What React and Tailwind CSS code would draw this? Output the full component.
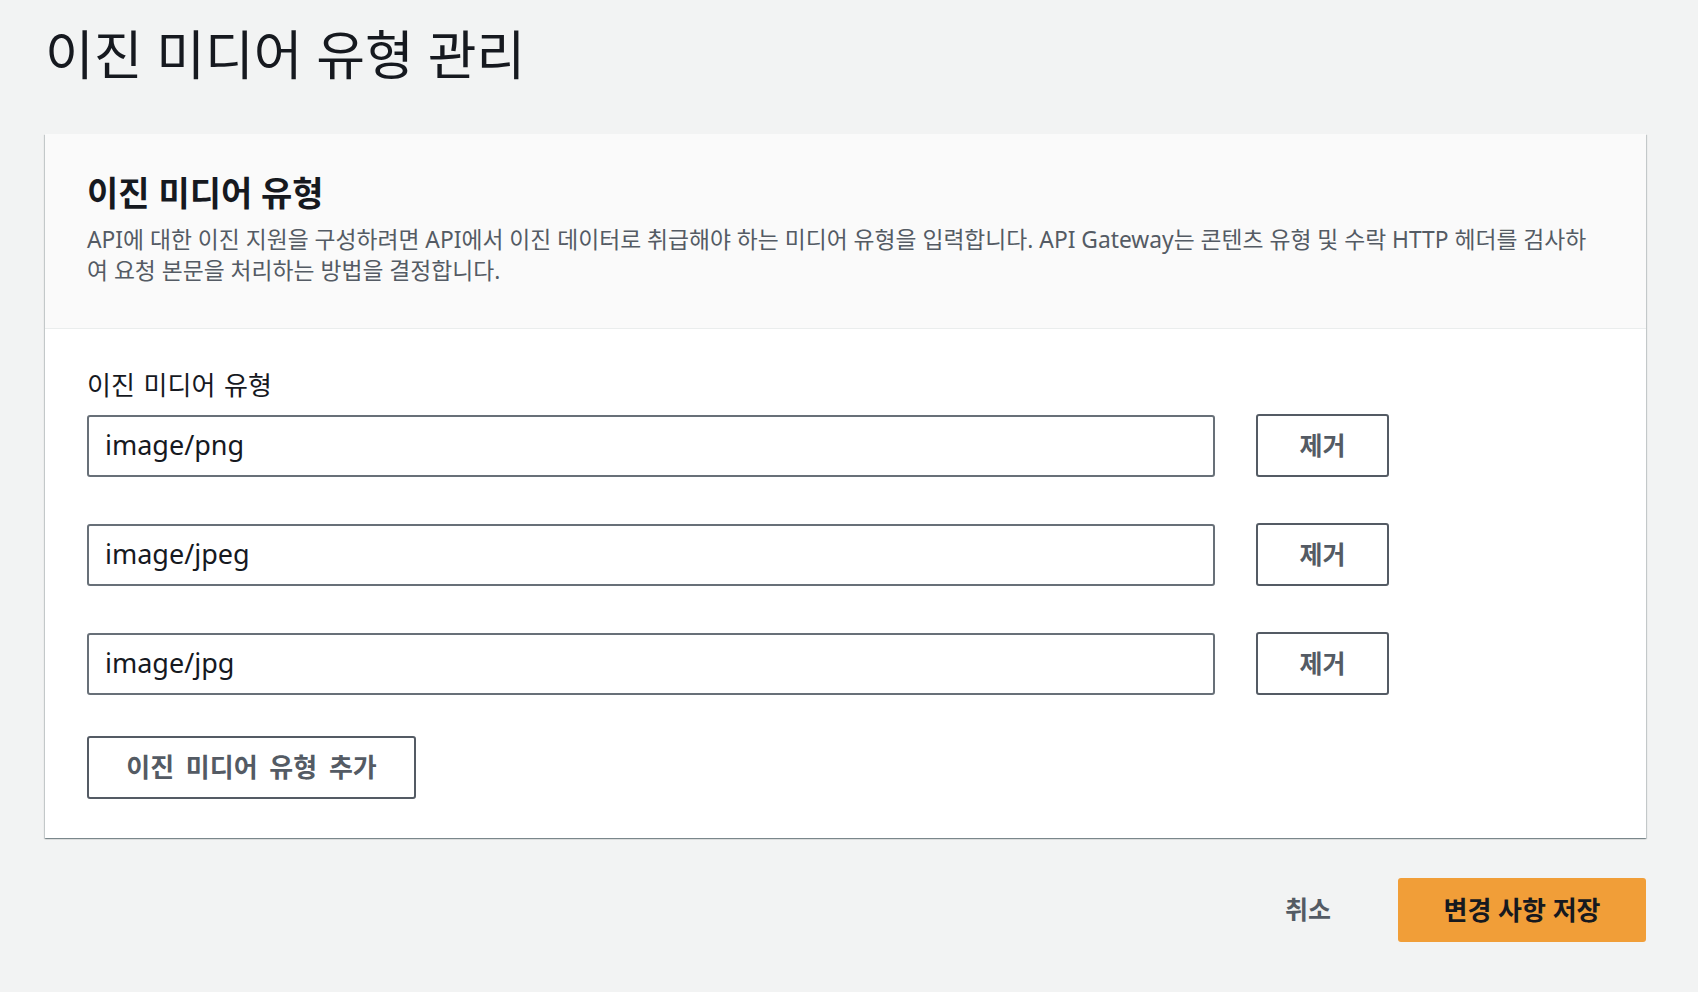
import React from "react";

const types = ["image/png", "image/jpeg", "image/jpg"];

export default function App() {
  return (
    <div className="min-h-screen bg-[#f2f3f3] pl-[45px] pr-[52px] font-['Noto_Sans','Noto_Sans_CJK_KR',sans-serif] text-[#16191f]">
      <h1 className="pt-[25px] text-[53px] leading-[60px] font-normal text-[#16191f]">
        이진 미디어 유형 관리
      </h1>

      <div className="mt-[49px] bg-white shadow-[0_1px_1px_0_rgba(0,28,36,0.3),1px_1px_1px_0_rgba(0,28,36,0.15),-1px_1px_1px_0_rgba(0,28,36,0.15)]">
        <div className="bg-[#fafafa] border-b border-[#eaeded] px-[42px] pt-[37px] pb-[42px]">
          <h2 className="text-[34px] leading-[44px] font-bold text-[#16191f]">이진 미디어 유형</h2>
          <p className="mt-[9px] text-[22.8px] leading-[31px] text-[#545b64] whitespace-nowrap">
            API에 대한 이진 지원을 구성하려면 API에서 이진 데이터로 취급해야 하는 미디어 유형을 입력합니다. API Gateway는 콘텐츠 유형 및 수락 HTTP 헤더를 검사하
            <br />
            여 요청 본문을 처리하는 방법을 결정합니다.
          </p>
        </div>

        <div className="px-[42px] pt-[39px] pb-[39px]">
          <label className="block text-[26px] leading-[34px] text-[#16191f] [word-spacing:2px]">이진 미디어 유형</label>
          <div className="mt-[12px] flex flex-col gap-[46px]">
            {types.map((t) => (
              <div key={t} className="flex items-center gap-[41px]">
                <div className="h-[62px] w-[1128px] rounded-[3px] border-2 border-[#687078] bg-white flex items-center pl-[16px] text-[27px] text-[#16191f]">
                  {t}
                </div>
                <button className="h-[63px] w-[133px] rounded-[3px] border-2 border-[#545b64] bg-white text-[25px] font-bold text-[#545b64]">
                  제거
                </button>
              </div>
            ))}
          </div>
          <button className="mt-[41px] h-[63px] w-[329px] rounded-[3px] border-2 border-[#545b64] bg-white text-[26px] font-bold text-[#545b64] [word-spacing:5px]">
            이진 미디어 유형 추가
          </button>
        </div>
      </div>

      <div className="mt-[40px] flex items-center justify-end">
        <button className="mr-[67px] text-[25px] font-bold text-[#545b64]">취소</button>
        <button className="h-[64px] w-[248px] rounded-[3px] bg-[#f19e38] text-[26px] font-bold text-[#16191f]">
          변경 사항 저장
        </button>
      </div>
    </div>
  );
}
